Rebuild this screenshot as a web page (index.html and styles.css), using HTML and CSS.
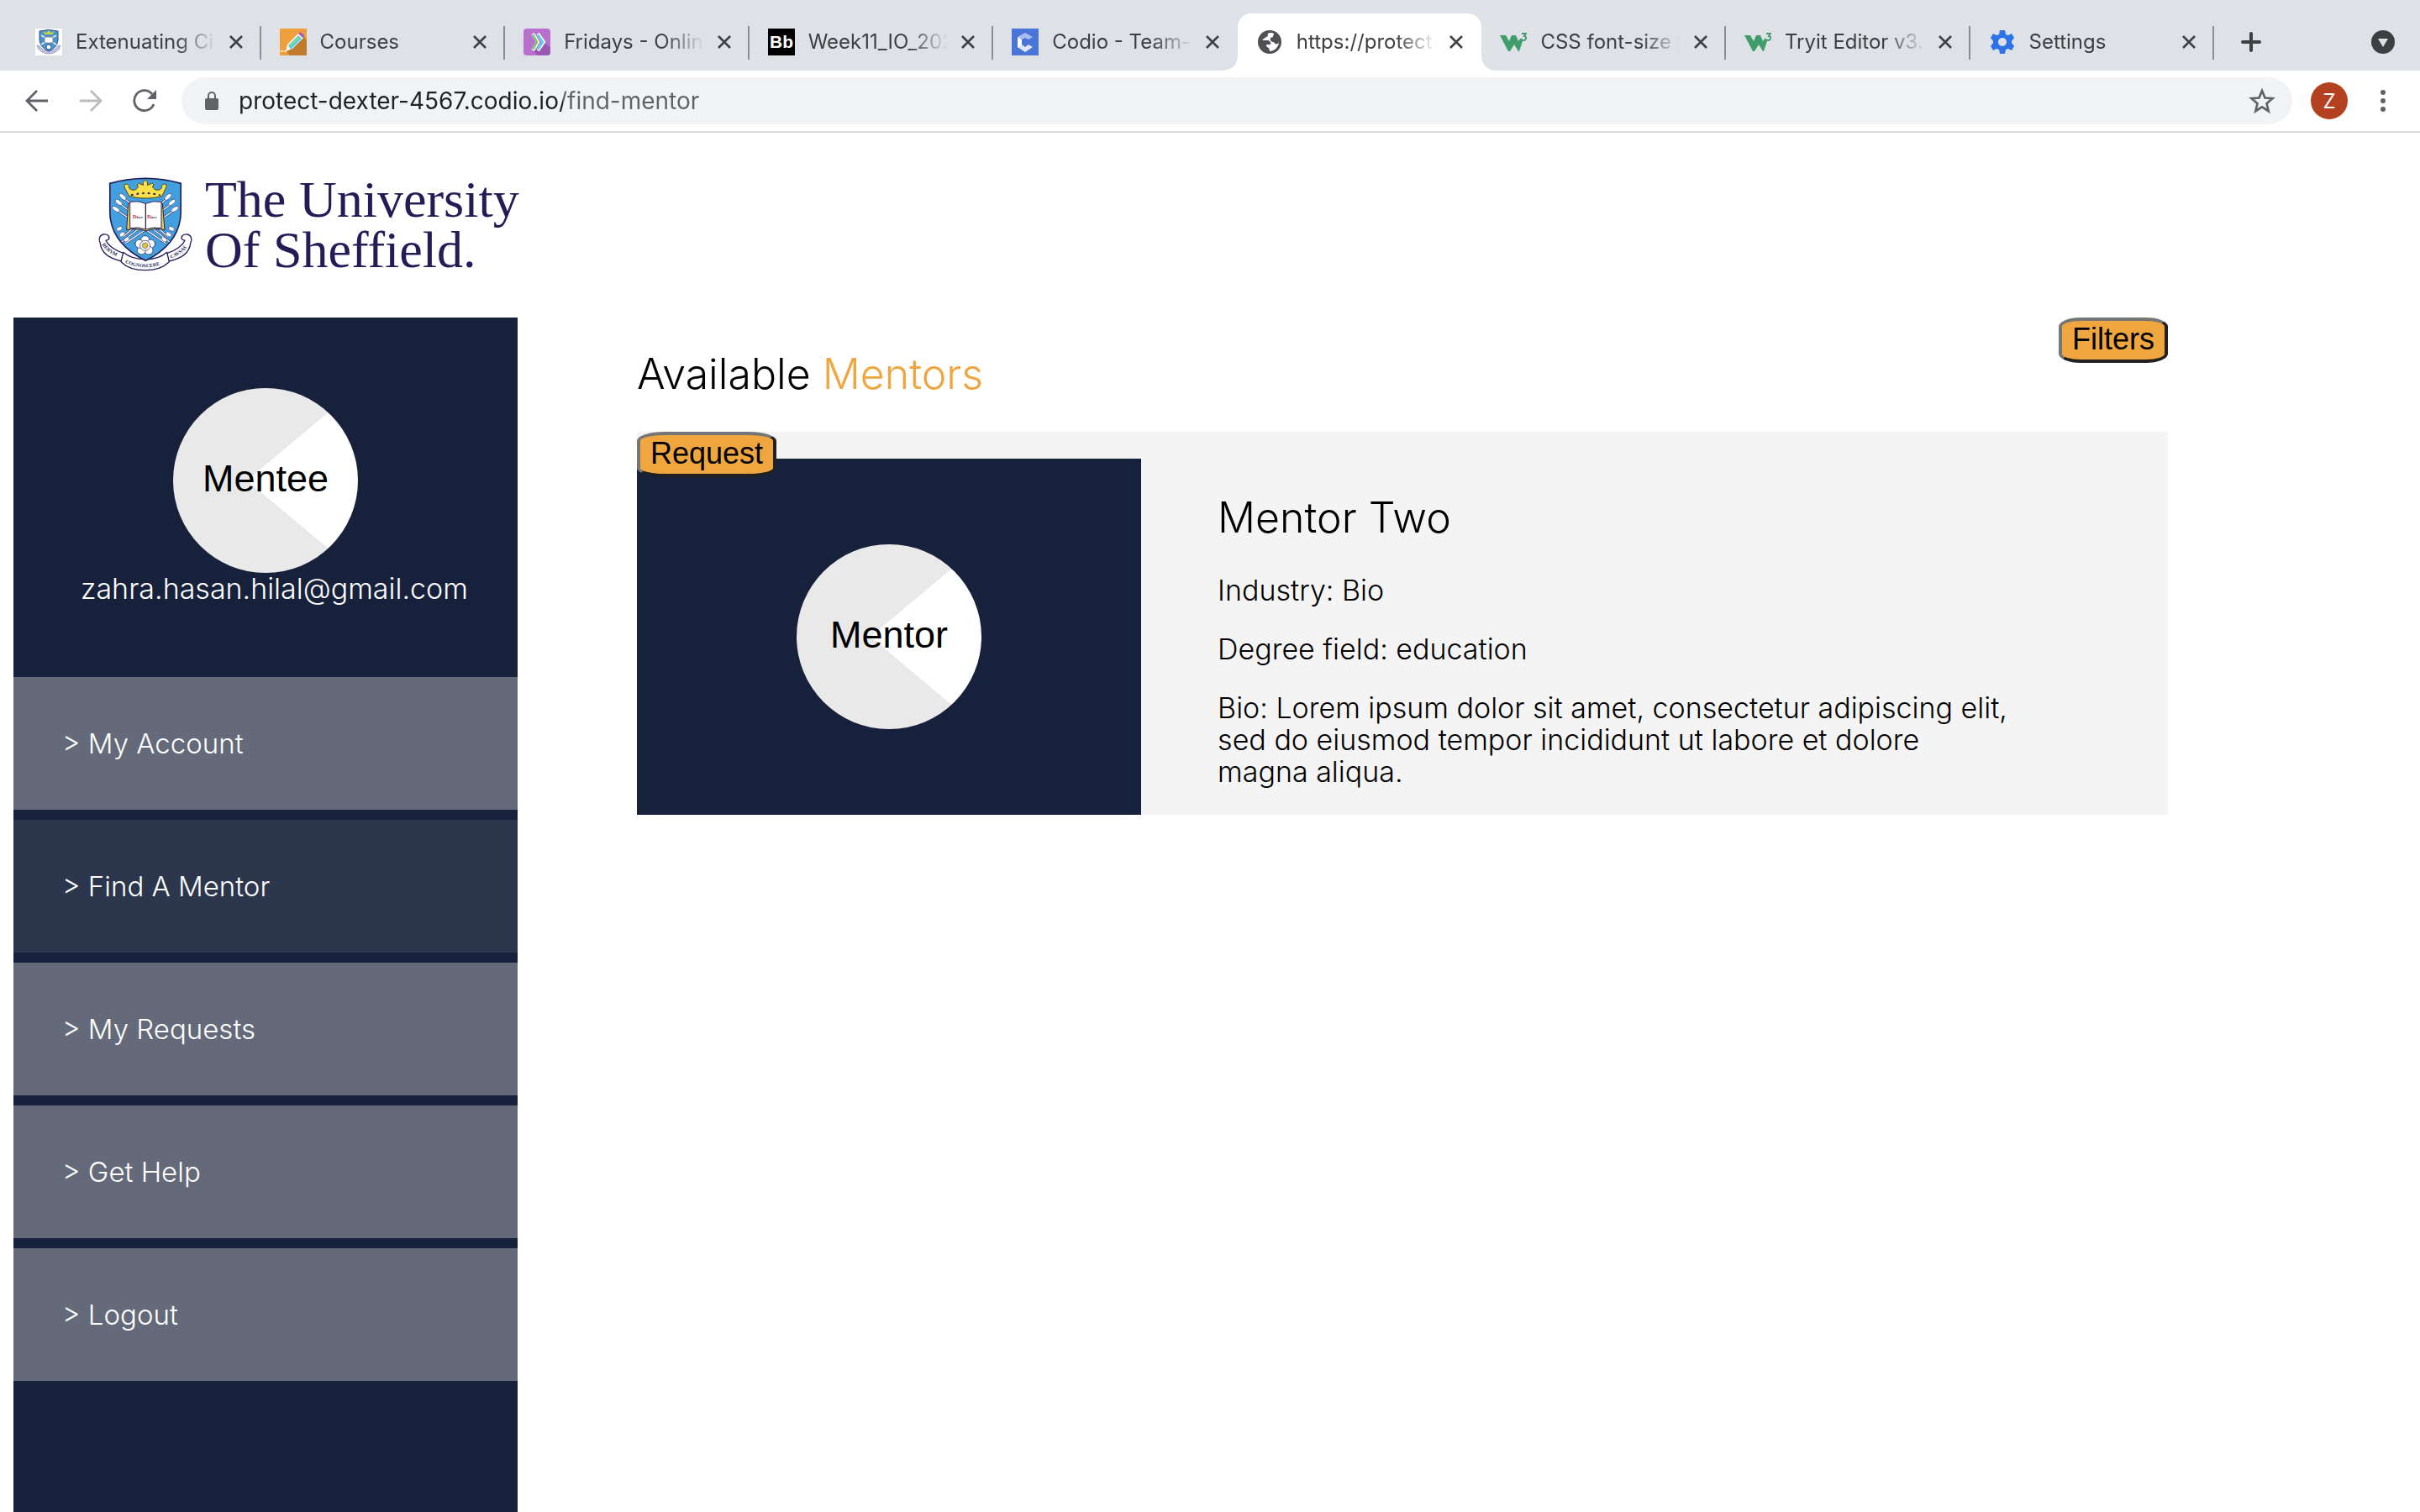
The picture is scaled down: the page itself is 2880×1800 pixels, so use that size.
FILE: index.html
```html
<!DOCTYPE html>
<html lang="en">
<head>
<meta charset="utf-8">
<title>Find a mentor</title>
<link rel="stylesheet" href="styles.css">
</head>
<body>
<svg class="sprite" aria-hidden="true">
  <symbol id="close" viewBox="0 0 16 16"><path d="M1 1 15 15M15 1 1 15" fill="none" stroke="#3c4043" stroke-width="2.6"/></symbol>
  <symbol id="w3" viewBox="0 0 32 32"><path d="M0 8h7l4 7 3-7h5l3 7 3-4 2 4-4 12h-1l-5-8-5 8h-2z" fill="#3f9c6b"/><path d="M26 6h5l-2 3c3 0 3 5-1 5l-2-1" fill="none" stroke="#3f9c6b" stroke-width="1.8"/></symbol>
</svg>

<div class="browser">
  <div class="tabstrip">
    <div class="tabs">
      <div class="tab"><svg class="favicon" viewBox="0 0 32 32"><path fill="#fff" d="M0 0h32v32H0z"/><path d="M2 20q2 9 14 10 12-1 14-10l-3 1q-4 6-11 6T5 21z" fill="#c9c5e2" stroke="#8a86b8" stroke-width=".8"/><path d="M5 3q11-3 22 0v11q-1 9-11 13Q6 23 5 14z" fill="#4a93cf" stroke="#33588f"/><path d="m7 8 18 11M25 8 7 19" stroke="#dbe8f5" stroke-width="2"/><path d="M11 7l-1-4 3 2 3-3 3 3 3-2-1 4z" fill="#c6d24a"/><path d="M11 10h10v7H11z" fill="#fff" stroke="#7d6f86" stroke-width=".8"/><circle cx="16" cy="22" r="3" fill="#fff" stroke="#33588f"/></svg><span class="tab-title">Extenuating Circumstances</span><button class="tab-close" aria-label="Close tab"><svg><use href="#close"/></svg></button></div>
      <div class="tab"><svg class="favicon" viewBox="0 0 32 32"><path fill="#efa03c" d="M0 0h32v32H0z"/><path d="M29 7v3l3 3v19H12L8 28z" fill="#c07c2c"/><path d="M0 26h8v2H0z" fill="#f6cf95"/><path d="M7 27 9 19 22 6l6 5-13 13z" fill="#fff"/><path d="M10 20 22 8l4 4-13 13z" fill="#55cdee"/><path d="m12 21 11-11" stroke="#86dc72" stroke-width="2"/><path d="m22 6 3-2 4 4-2 3z" fill="#a55fc0"/></svg><span class="tab-title">Courses</span><button class="tab-close" aria-label="Close tab"><svg><use href="#close"/></svg></button></div>
      <div class="tab"><svg class="favicon" viewBox="0 0 32 32"><rect width="32" height="32" rx="4" fill="#b86fce"/><path d="m24 16 8 7v5q0 4-4 4H17l-5-5z" fill="#9c57b2"/><path d="m11 6 6 10-6 10M17 6l7 10-7 10" fill="none" stroke="#fff" stroke-width="4"/><path d="m11 7 5 9-5 9" fill="none" stroke="#67c95c" stroke-width="2.4"/><path d="m17 7 6 9-6 9" fill="none" stroke="#52cfee" stroke-width="2.4"/></svg><span class="tab-title">Fridays - Online Lecture</span><button class="tab-close" aria-label="Close tab"><svg><use href="#close"/></svg></button></div>
      <div class="tab"><svg class="favicon" viewBox="0 0 32 32"><path d="M0 0h32v32H0z"/><text x="16" y="23" class="bb">Bb</text></svg><span class="tab-title">Week11_IO_2021</span><button class="tab-close" aria-label="Close tab"><svg><use href="#close"/></svg></button></div>
      <div class="tab"><svg class="favicon" viewBox="0 0 32 32"><path fill="#4b74d9" d="M0 0h32v32H0z"/><path d="m7 10 9-5 9 5-5 3-4-2-4 2z" fill="#a9bdf0"/><path d="M7 10l5 3v7l-5 3z" fill="#fff"/><path d="m7 22 5-3 4 3 4-3 5 3-9 6z" fill="#dfe7fb"/></svg><span class="tab-title">Codio - Team-Project</span><button class="tab-close" aria-label="Close tab"><svg><use href="#close"/></svg></button></div>
      <div class="tab active"><svg class="favicon" viewBox="0 0 32 32"><circle cx="16" cy="16" r="14" fill="#4f5155"/><path d="M17 5c-3 0-4 2-3 4-3 1-5 3-7 5h5c4 0 6 2 5 5h-5c0 3 1 3 3 4l1 4c5 0 10-4 11-10-2 2-5 2-6-1-3 0-5-2-4-5l3-1c0-2 1-3 1-4-1-1-2-1-4-1z" fill="#fff"/></svg><span class="tab-title">https://protect-dexter</span><button class="tab-close" aria-label="Close tab"><svg><use href="#close"/></svg></button></div>
      <div class="tab"><svg class="favicon"><use href="#w3"/></svg><span class="tab-title">CSS font-size property</span><button class="tab-close" aria-label="Close tab"><svg><use href="#close"/></svg></button></div>
      <div class="tab"><svg class="favicon"><use href="#w3"/></svg><span class="tab-title">Tryit Editor v3.7</span><button class="tab-close" aria-label="Close tab"><svg><use href="#close"/></svg></button></div>
      <div class="tab"><svg class="favicon" viewBox="0 0 32 32"><path d="M13 2h6l1 5 3 1 4-2 3 5-3 4v2l3 4-3 5-4-2-3 1-1 5h-6l-1-5-3-1-4 2-3-5 3-4v-2l-3-4 3-5 4 2 3-1z" fill="#2f73e8"/><circle cx="16" cy="16" r="5" fill="#dee1e6"/></svg><span class="tab-title">Settings</span><button class="tab-close" aria-label="Close tab"><svg><use href="#close"/></svg></button></div>
    </div>
    <div class="tab-actions">
      <button class="icon-button new-tab" aria-label="New tab"><svg viewBox="0 0 24 24"><path d="M12 2v20M2 12h20" stroke="#3c4043" stroke-width="4" stroke-linecap="round"/></svg></button>
      <button class="icon-button" aria-label="Search tabs"><svg viewBox="0 0 28 28"><circle cx="14" cy="14" r="14" fill="#3c4043"/><path d="M8 10h12l-6 10z" fill="#dee1e6"/></svg></button>
    </div>
  </div>
  <div class="toolbar">
    <button class="icon-button" aria-label="Back"><svg viewBox="0 0 28 28"><path d="M27 14H3M14 2 2 14l12 12" fill="none" stroke="#5f6368" stroke-width="2.8"/></svg></button>
    <button class="icon-button" aria-label="Forward"><svg viewBox="0 0 28 28"><path d="M1 14h24M14 2l12 12-12 12" fill="none" stroke="#babcbe" stroke-width="2.8"/></svg></button>
    <button class="icon-button" aria-label="Reload"><svg viewBox="0 0 28 28"><path d="M25 18A12 12 0 1 1 23 6" fill="none" stroke="#5f6368" stroke-width="2.8"/><path d="M28 1v11H17z" fill="#5f6368"/></svg></button>
    <div class="omnibox">
      <svg class="lock" viewBox="0 0 16 22"><rect y="8" width="16" height="14" rx="2" fill="#5f6368"/><path d="M4 9V5a4 4 0 0 1 8 0v4" fill="none" stroke="#5f6368" stroke-width="2"/></svg>
      <input class="url" type="text" aria-label="Address" value="protect-dexter-4567.codio.io/find-mentor">
      <button class="icon-button" aria-label="Bookmark"><svg viewBox="0 0 32 32"><path d="m16 4 3.500 8.500 9 .7-7 6 2.200 9L16 23.300l-7.700 4.900 2.200-9-7-6 9-.7z" fill="none" stroke="#5f6368" stroke-width="2.700"/></svg></button>
    </div>
    <button class="profile" aria-label="Profile">Z</button>
    <button class="icon-button" aria-label="Menu"><svg viewBox="0 0 28 28" fill="#5f6368"><circle cx="14" cy="4" r="3"/><circle cx="14" cy="14" r="3"/><circle cx="14" cy="24" r="3"/></svg></button>
  </div>
</div>

<header class="site-header">
  <svg class="crest" viewBox="0 0 390 390" role="img" aria-label="University crest">
    <g fill="#fff" stroke="#231f5c" stroke-width="4" stroke-linejoin="round">
      <path d="M28 254c-8-14-2-30 12-32 14-2 24 8 18 18l-10 4c10 22 34 36 64 46l-6 28c-40-8-74-28-78-64z"/>
      <path d="M350 254c8-14 2-30-12-32-14-2-24 8-18 18l10 4c-10 22-34 36-64 46l6 28c40-8 74-28 78-64z"/>
      <path d="M110 286c40 34 118 34 156 0l8 34c-40 40-132 40-172 0z"/>
    </g>
    <path d="M62 40Q126 22 190 22T316 40C314 90 318 130 314 166 304 232 258 282 190 316 122 282 74 232 64 166 60 130 64 90 62 40z" fill="#43a0de" stroke="#231f5c" stroke-width="5"/>
    <g stroke="#231f5c" stroke-width="7"><path d="M110 90 270 230M95 110 275 248M82 132 262 254M270 90 110 230M285 110 105 248M298 132 118 254"/></g>
    <g stroke="#fff" stroke-width="4"><path d="M110 90 270 230M95 110 275 248M82 132 262 254M270 90 110 230M285 110 105 248M298 132 118 254"/></g>
    <g fill="#fff" stroke="#231f5c" stroke-width="1.5">
      <g id="bolts"><ellipse cx="108" cy="88" rx="15" ry="7" transform="rotate(42 108 88)"/><ellipse cx="94" cy="108" rx="15" ry="7" transform="rotate(38 94 108)"/><ellipse cx="84" cy="132" rx="15" ry="7" transform="rotate(34 84 132)"/><ellipse cx="96" cy="202" rx="11" ry="7" transform="rotate(-32 96 202)"/><ellipse cx="106" cy="222" rx="11" ry="7" transform="rotate(-36 106 222)"/><ellipse cx="122" cy="240" rx="11" ry="7" transform="rotate(-40 122 240)"/></g>
      <use href="#bolts" transform="matrix(-1 0 0 1 378 0)"/>
    </g>
    <path d="M130 84C122 66 112 54 114 46c8-10 20 2 16 10 12 12 26 10 34-4-8-8 0-16 6-10l12 4c-8-22 20-22 14 0l12-4c8-6 14 2 6 10 8 14 22 16 34 4-4-8 8-20 16-10 2 8-8 20-14 38-30 12-90 12-120 0z" fill="#fbe04a" stroke="#4b431c" stroke-width="3"/>
    <path d="M138 82q52-14 104 0" fill="none" stroke="#231f5c" stroke-width="6" stroke-dasharray="8 12"/>
    <path d="M128 112l-6 94q36-8 68 4 32-12 68-4l-8-94q-32-8-60 2-30-10-62-2z" fill="#e8cf4a" stroke="#231f5c" stroke-width="3"/>
    <path d="M134 106v94q30-6 56 4V112q-26-12-56-6zM246 106v94q-30-6-56 4V112q26-12 56-6z" fill="#fff" stroke="#231f5c" stroke-width="3"/>
    <text x="143" y="166" class="crest-book"><tspan class="crest-cap">D</tspan>isce</text>
    <text x="195" y="166" class="crest-book"><tspan class="crest-cap">D</tspan>oce</text>
    <path d="M188 222l8 16h-16zM148 250l14 0-8 14zM228 250l-14 0 8 14zM164 298l14-6-4-8zM212 298l-14-6 4-8z" fill="#2d7d46"/>
    <g fill="#fff" stroke="#231f5c" stroke-width="2"><circle cx="188" cy="242" r="15"/><circle cx="208" cy="256" r="15"/><circle cx="201" cy="279" r="15"/><circle cx="175" cy="279" r="15"/><circle cx="168" cy="256" r="15"/><circle cx="188" cy="262" r="18"/></g>
    <circle cx="188" cy="262" r="10" fill="#d9c23c" stroke="#231f5c" stroke-width="3" stroke-dasharray="3 3"/>
    <path id="mottoLeft" d="M34 258q20 34 72 50" fill="none"/>
    <path id="mottoMid" d="M116 323q74 34 150-2" fill="none"/>
    <path id="mottoRight" d="M280 308q46-18 66-52" fill="none"/>
    <text class="crest-motto"><textPath href="#mottoLeft">RERVM</textPath></text>
    <text class="crest-motto"><textPath href="#mottoMid">COGNOSCERE</textPath></text>
    <text class="crest-motto"><textPath href="#mottoRight">CAVSAS</textPath></text>
  </svg>
  <div class="wordmark">The University<br>Of Sheffield.</div>
</header>

<div class="page">
  <aside class="sidebar">
    <div class="profile-card">
      <div class="avatar">Mentee</div>
      <div class="email">zahra.hasan.hilal@gmail.com</div>
    </div>
    <nav class="menu">
      <a href="#account">&gt; My Account</a>
      <a href="#find" class="current">&gt; Find A Mentor</a>
      <a href="#requests">&gt; My Requests</a>
      <a href="#help">&gt; Get Help</a>
      <a href="#logout">&gt; Logout</a>
    </nav>
  </aside>
  <main class="content">
    <div class="content-head">
      <h1>Available <span class="accent">Mentors</span></h1>
      <button class="action">Filters</button>
    </div>
    <article class="mentor">
      <button class="action request">Request</button>
      <div class="mentor-photo"><div class="avatar">Mentor</div></div>
      <div class="mentor-info">
        <h2>Mentor Two</h2>
        <p>Industry: Bio</p>
        <p>Degree field: education</p>
        <p>Bio: Lorem ipsum dolor sit amet, consectetur adipiscing elit, sed do eiusmod tempor incididunt ut labore et dolore magna aliqua.</p>
      </div>
    </article>
  </main>
</div>
</body>
</html>
```
FILE: styles.css
```css
* { box-sizing: border-box; }

body {
  margin: 0;
  min-height: 100vh;
  display: flex;
  flex-direction: column;
  background: #fff;
  color: #000;
  font: 300 34px/38px Inter, sans-serif;
}

h1, h2, p { margin: 0; }
h1, h2 { font-size: 50px; line-height: 60px; font-weight: 300; }
button { font-family: inherit; }
.sprite { position: absolute; width: 0; height: 0; }

/* Browser chrome */
.browser { font-weight: 400; border-bottom: 2px solid #dadce0; }
.tabstrip { display: flex; height: 84px; padding: 16px 30px 0 20px; background: #dee1e6; }
.tabs { display: flex; flex: 1; min-width: 0; }
.tab {
  position: relative;
  display: flex;
  flex: 1;
  min-width: 0;
  align-items: center;
  gap: 16px;
  padding: 0 22px;
  font-size: 24px;
  line-height: 32px;
  color: #3c4043;
}
.tab::after {
  content: "";
  position: absolute;
  right: 0;
  top: 15px;
  width: 2px;
  height: 40px;
  background: #8b8e93;
}
.tab.active { background: #fff; border-radius: 16px 16px 0 0; }
.tab:has(+ .active)::after { display: none; }
.tab.active::before,
.tab.active::after {
  content: "";
  position: absolute;
  top: auto;
  bottom: 0;
  width: 16px;
  height: 16px;
}
.tab.active::before { left: -16px; background: radial-gradient(circle at 0 0, #dee1e6 15px, #fff 16px); }
.tab.active::after { right: -16px; background: radial-gradient(circle at 100% 0, #dee1e6 15px, #fff 16px); }
.favicon { width: 32px; height: 32px; flex: none; }
.bb { font: 700 21px "Liberation Sans", sans-serif; fill: #fff; text-anchor: middle; }
.tab-title {
  flex: 1;
  min-width: 0;
  overflow: hidden;
  white-space: nowrap;
  -webkit-mask-image: linear-gradient(to left, transparent, #000 48px);
  mask-image: linear-gradient(to left, transparent, #000 48px);
}
.tab-close { flex: none; width: 16px; height: 16px; padding: 0; border: 0; background: none; }
.tab-close svg { display: block; width: 16px; height: 16px; }
.tab-actions {
  display: flex;
  justify-content: space-between;
  align-items: center;
  width: 215px;
  padding-left: 32px;
}
.icon-button { display: flex; flex: none; padding: 0; border: 0; background: none; }
.icon-button svg { width: 28px; height: 28px; }
.new-tab svg { width: 24px; height: 24px; }

.toolbar { display: flex; align-items: center; gap: 36px; height: 72px; padding: 0 30px; }
.omnibox {
  display: flex;
  flex: 1;
  align-items: center;
  gap: 24px;
  height: 56px;
  margin-left: -6px;
  margin-right: -14px;
  padding: 0 20px 0 28px;
  border-radius: 28px;
  background: #f1f3f4;
}
.omnibox .icon-button svg { width: 32px; height: 32px; }
.lock { width: 16px; height: 22px; }
.url {
  flex: 1;
  min-width: 0;
  padding: 0;
  border: 0;
  outline: 0;
  font: 400 28px/40px Inter, sans-serif;
  color: transparent;
  background: linear-gradient(to right, #202124 386px, #5f6368 386px);
  -webkit-background-clip: text;
  background-clip: text;
}
.profile {
  flex: none;
  width: 44px;
  height: 44px;
  margin-right: -8px;
  padding: 0;
  border: 0;
  border-radius: 50%;
  background: #b3401f;
  color: #fff;
  font-size: 24px;
}

/* Site header */
.site-header { display: flex; align-items: flex-start; gap: 4px; height: 220px; padding: 47px 110px 0; }
.crest { flex: none; width: 130px; height: 130px; }
.crest-book { font: 700 15px "Liberation Serif", serif; fill: #231f5c; }
.crest-cap { fill: #d8232a; font-size: 20px; }
.crest-motto { font: 700 18px "Liberation Serif", serif; fill: #231f5c; }
.wordmark { padding-top: 2px; font: 400 62px/60px "Liberation Serif", serif; color: #231c57; }

/* Page */
.page { display: flex; flex: 1; padding: 0 16px; }
.sidebar { flex: none; width: 600px; background: #17213b; color: #fff; }
.profile-card { height: 428px; padding-top: 84px; }
.avatar {
  display: flex;
  align-items: center;
  justify-content: center;
  width: 220px;
  height: 220px;
  margin: 0 auto;
  padding-bottom: 4px;
  border-radius: 50%;
  background: conic-gradient(from 50deg at 40% 50%, #fff 80deg, #e9e9e9 80deg);
  color: #000;
  font: 400 45px/52px "Liberation Sans", sans-serif;
}
.email { padding-left: 80px; }
.menu { display: flex; flex-direction: column; gap: 12px; font-size: 33px; }
.menu a { padding: 60px 58px; background: #646a79; color: #fff; text-decoration: none; }
.menu .current { background: #2c364d; }

.content { flex: 1; min-width: 0; padding: 0 284px 0 142px; }
.content-head { display: flex; justify-content: space-between; align-items: flex-start; }
.content-head h1 { padding: 37px 0 39px; }
.accent { color: #f0a63e; }
.action {
  padding: 1px 12px 3px;
  border: 4px solid;
  border-color: #767676 #212121 #212121 #767676;
  border-radius: 20%;
  background: #f0a63e;
  color: #000;
  font: 400 36px/42px "Liberation Sans", sans-serif;
}
.mentor { position: relative; display: flex; background: #f4f4f4; }
.request { position: absolute; left: 0; top: 0; }
.mentor-photo { display: flex; flex: none; align-items: center; width: 600px; margin-top: 32px; background: #17213b; }
.mentor-info { flex: 1; padding: 72px 10% 32px 5%; }
.mentor-info h2 { margin-bottom: 38px; }
.mentor-info p + p { margin-top: 32px; }
```
